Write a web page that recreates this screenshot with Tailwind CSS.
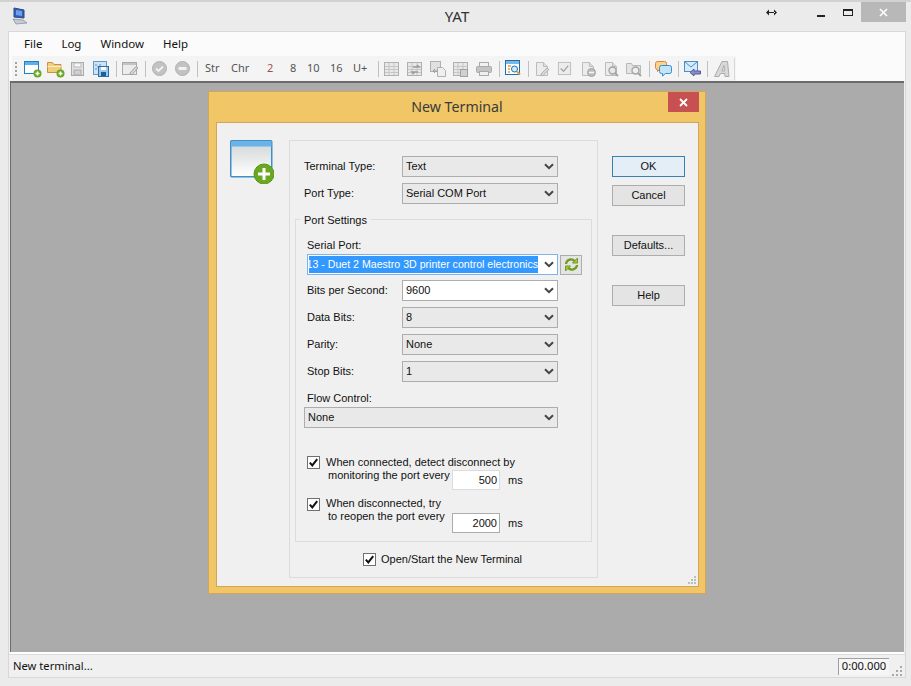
<!DOCTYPE html>
<html lang="en">
<head>
  <meta charset="UTF-8" />
  <title>YAT</title>
  <script src="https://cdn.jsdelivr.net/npm/@tailwindcss/browser@4"></script>
</head>
<body class="bg-[#ebebeb] overflow-hidden font-['Liberation_Sans',sans-serif] text-[11px] text-[#111]">
  <svg class="hidden">
    <symbol id="chev" viewBox="0 0 10 7"><path d="M1 1.200 5 5.200 9 1.200" fill="none" stroke="#444" stroke-width="2"/></symbol>
    <symbol id="tick" viewBox="0 0 13 13"><rect x=".5" y=".5" width="12" height="12" fill="#fff" stroke="#707070"/><path d="M2.800 6.600 5.300 9.400 10.200 3.200" fill="none" stroke="#111" stroke-width="2"/></symbol>
    <symbol id="grid" viewBox="0 0 16 16"><rect x=".5" y="1.500" width="14" height="13" fill="#e8e8e8" stroke="#b0b0b0"/><path d="M1 5.500h13M1 8.500h13M1 11.500h13M5 2v12M10 2v12" stroke="#c6c6c6"/></symbol>
    <symbol id="page" viewBox="0 0 16 16"><path d="M2.500 1.500h7l4 4v9h-11z" fill="#ececec" stroke="#bcbcbc"/><path d="M9.500 1.500v4h4" fill="#dcdcdc" stroke="#bcbcbc"/></symbol>
  </svg>

  <div class="w-[911px] h-[686px] relative border-t-2 border-[#d2d2d2]">
    <!-- title bar -->
    <div class="h-[29px] relative">
      <svg class="absolute left-[12px] top-[5px]" width="16" height="18" viewBox="0 0 16 18"><path d="M2 1 12 3V11L2 10z" fill="#2a62c4" stroke="#33457a"/><path d="M4 3 10 4V9L4 8z" fill="#6f9fe8"/><path d="M1 12 11 13 15 16 4 17z" fill="#c6ccd6" stroke="#7d8798" stroke-width=".7"/></svg>
      <div class="text-center text-[15px] leading-[28px] text-[#333] font-['Noto_Sans',sans-serif] pl-[3px]">YAT</div>
      <div class="absolute right-[5px] top-0 h-[20px] flex items-center">
        <svg class="mr-[40px]" width="11" height="7" viewBox="0 0 11 7"><path d="M0 3.500 3 .5v6zM11 3.500 8 .5v6zM2 3h7v1H2z" fill="#222"/></svg>
        <div class="w-[8px] h-[2px] bg-[#222] mt-[7px] mr-[18px]"></div>
        <div class="w-[10px] h-[7px] border border-t-2 border-[#222] mr-[8px]"></div>
        <div class="w-[45px] h-[20px] bg-[#b8b8b8] flex items-center justify-center">
          <svg width="9" height="9" viewBox="0 0 9 9"><path d="M1 1l7 7M8 1 1 8" stroke="#fff" stroke-width="1.600"/></svg>
        </div>
      </div>
    </div>

    <!-- main window client -->
    <div class="mx-[8px] w-[898px] h-[647px] border border-[#d8d8d8] bg-[#f0f0f0] flex flex-col">
      <div class="h-[24px] bg-[#fbfbfb] flex items-center pl-[15px] text-[11.5px] font-['Noto_Sans',sans-serif] gap-[19px]">
        <span>File</span><span>Log</span><span>Window</span><span>Help</span>
      </div>
      <!-- toolbar -->
      <div class="h-[25px] bg-[#fbfbfb] pl-[3px]">
        <div class="w-[724px] h-[25px] bg-[#f4f4f4] flex items-center text-[#555] font-['Noto_Sans',sans-serif] text-[11px]">
          <div class="w-[12px] pl-[3px] flex flex-col gap-[2px] shrink-0">
            <i class="block w-[2px] h-[2px] bg-[#a0a0a0]"></i><i class="block w-[2px] h-[2px] bg-[#a0a0a0]"></i><i class="block w-[2px] h-[2px] bg-[#a0a0a0]"></i><i class="block w-[2px] h-[2px] bg-[#a0a0a0]"></i>
          </div>
          <div class="w-[23px] flex shrink-0"><svg width="18" height="18" viewBox="0 0 18 18"><rect x=".5" y="1.500" width="14" height="12" fill="#fff" stroke="#1e81c8"/><rect x="1" y="2" width="13" height="3" fill="#5fb0e6"/><circle cx="13.500" cy="13.500" r="4" fill="#6aa821"/><path d="M13.500 11.500v4M11.500 13.500h4" stroke="#fff" stroke-width="1.500"/></svg></div>
          <div class="w-[23px] flex shrink-0"><svg width="18" height="18" viewBox="0 0 18 18"><path d="M.5 2.500h5l1.500 2h7v8H.5z" fill="#f3cd78" stroke="#c2944a"/><path d="M.5 6.500h14" stroke="#fff0c4"/><circle cx="13.500" cy="13.500" r="4" fill="#6aa821"/><path d="M13.500 11.500v4M11.500 13.500h4" stroke="#fff" stroke-width="1.500"/></svg></div>
          <div class="w-[23px] flex shrink-0"><svg width="16" height="16" viewBox="0 0 16 16"><rect x="1.500" y="1.500" width="12" height="13" fill="#e2e2e2" stroke="#aaa"/><rect x="4" y="2" width="7" height="4" fill="#f6f6f6" stroke="#b8b8b8"/><rect x="4" y="9" width="7" height="5" fill="#cfcfcf" stroke="#aaa"/></svg></div>
          <div class="w-[23px] flex shrink-0"><svg width="16" height="16" viewBox="0 0 16 16"><rect x=".5" y=".5" width="13" height="13" fill="#cfe3f5" stroke="#5a9bd0"/><path d="M2 3h2v2H2zM6 3h2v2H6zM4 5h2v2H4zM2 7h2v2H2z" fill="#8fbce4"/><rect x="5.500" y="5.500" width="10" height="10" fill="#9cc7ea" stroke="#2a6ea8"/><rect x="8" y="6" width="5" height="3" fill="#fff"/><rect x="8" y="11" width="5" height="4" fill="#1f5f96"/></svg></div>
          <div class="w-[1px] h-[16px] bg-[#c0c0c0] mr-[5px] shrink-0"></div>
          <div class="w-[23px] flex shrink-0"><svg width="17" height="16" viewBox="0 0 17 16"><rect x=".5" y="1.500" width="14" height="12" fill="#ececec" stroke="#aaa"/><rect x="1" y="2" width="13" height="2" fill="#c4c4c4"/><path d="M8 12 14 5.500l2 1.500-6 6.500H8z" fill="#d8d8d8" stroke="#a0a0a0"/></svg></div>
          <div class="w-[1px] h-[16px] bg-[#c0c0c0] mr-[6px] shrink-0"></div>
          <div class="w-[23px] flex shrink-0"><svg width="15" height="15" viewBox="0 0 15 15"><circle cx="7.500" cy="7.500" r="7" fill="#c2c2c2" stroke="#b0b0b0"/><path d="M4 7.500 6.500 10l4.500-4.500" fill="none" stroke="#f2f2f2" stroke-width="1.800"/></svg></div>
          <div class="w-[22px] flex shrink-0"><svg width="15" height="15" viewBox="0 0 15 15"><circle cx="7.500" cy="7.500" r="7" fill="#c2c2c2" stroke="#b0b0b0"/><rect x="3.500" y="6" width="8" height="3" fill="#f2f2f2"/></svg></div>
          <div class="w-[1px] h-[16px] bg-[#c0c0c0] mr-[7px] shrink-0"></div>
          <span class="w-[26px] shrink-0">Str</span>
          <span class="w-[36px] shrink-0">Chr</span>
          <span class="w-[23px] shrink-0 text-[#a05050]">2</span>
          <span class="w-[17px] shrink-0">8</span>
          <span class="w-[23px] shrink-0">10</span>
          <span class="w-[23px] shrink-0">16</span>
          <span class="w-[25px] shrink-0">U+</span>
          <div class="w-[1px] h-[16px] bg-[#c0c0c0] mr-[5px] shrink-0"></div>
          <div class="w-[23px] flex shrink-0"><svg width="16" height="16"><use href="#grid"/></svg></div>
          <div class="w-[23px] flex shrink-0"><svg width="16" height="16" viewBox="0 0 16 16"><use href="#grid" width="16" height="16"/><path d="M6 6h6l-2-2M11 11H5l2 2" fill="none" stroke="#9a9a9a" stroke-width="1.500"/></svg></div>
          <div class="w-[23px] flex shrink-0"><svg width="16" height="16" viewBox="0 0 16 16"><rect x=".5" y=".5" width="10" height="10" fill="#e0e0e0" stroke="#b0b0b0"/><path d="M7.500 6.500h5l3 3v6h-8z" fill="#efefef" stroke="#b0b0b0"/><path d="M3 10h5M3 10l2-2M3 10l2 2" stroke="#999" fill="none"/></svg></div>
          <div class="w-[23px] flex shrink-0"><svg width="16" height="16" viewBox="0 0 16 16"><use href="#grid" width="16" height="16"/><rect x="7.500" y="8.500" width="7" height="7" fill="#d0d0d0" stroke="#a0a0a0"/></svg></div>
          <div class="w-[23px] flex shrink-0"><svg width="16" height="16" viewBox="0 0 16 16"><rect x="3.500" y="1.500" width="9" height="5" fill="#f2f2f2" stroke="#aaa"/><rect x=".5" y="5.500" width="15" height="6" rx="1" fill="#c4c4c4" stroke="#aaa"/><rect x="3.500" y="10.500" width="9" height="4" fill="#efefef" stroke="#aaa"/></svg></div>
          <div class="w-[1px] h-[16px] bg-[#c0c0c0] mr-[5px] shrink-0"></div>
          <div class="w-[23px] flex shrink-0"><svg width="17" height="17" viewBox="0 0 17 17"><rect x=".5" y=".5" width="14" height="14" fill="#fff" stroke="#1a6fb4"/><rect x="1" y="1" width="13" height="3" fill="#79b7e4"/><path d="M3 6h3M3 9h2M3 12h2" stroke="#e09a3a" stroke-width="1.400"/><circle cx="9.500" cy="9" r="3" fill="#d7ebf8" stroke="#1a6fb4"/><path d="M12 11.500l3 3" stroke="#d9a13c" stroke-width="2"/></svg></div>
          <div class="w-[1px] h-[16px] bg-[#c0c0c0] mr-[5px] shrink-0"></div>
          <div class="w-[23px] flex shrink-0"><svg width="16" height="16" viewBox="0 0 16 16"><use href="#page" width="16" height="16"/><path d="M7 13 13 7l2 1.500-6 6H7z" fill="#d8d8d8" stroke="#b0b0b0"/></svg></div>
          <div class="w-[23px] flex shrink-0"><svg width="15" height="15" viewBox="0 0 16 16"><rect x="1.500" y="1.500" width="13" height="13" fill="#ececec" stroke="#bcbcbc"/><path d="M4 8l3 3 5-6" fill="none" stroke="#a4a4a4" stroke-width="1.400"/></svg></div>
          <div class="w-[23px] flex shrink-0"><svg width="16" height="16" viewBox="0 0 16 16"><use href="#page" width="16" height="16"/><circle cx="11.500" cy="11.500" r="4" fill="#bbb" stroke="#a4a4a4"/><rect x="9" y="10.700" width="5" height="1.600" fill="#f4f4f4"/></svg></div>
          <div class="w-[23px] flex shrink-0"><svg width="16" height="16" viewBox="0 0 16 16"><use href="#page" width="16" height="16"/><circle cx="9.500" cy="9.500" r="3.500" fill="#e8e8e8" stroke="#a4a4a4" stroke-width="1.400"/><path d="M12 12l3 3" stroke="#a4a4a4" stroke-width="2"/></svg></div>
          <div class="w-[23px] flex shrink-0"><svg width="16" height="16" viewBox="0 0 16 16"><path d="M.5 2.500h5l1 2h8v8H.5z" fill="#e4e4e4" stroke="#b8b8b8"/><circle cx="9.500" cy="9.500" r="3.500" fill="#eee" stroke="#a4a4a4" stroke-width="1.400"/><path d="M12 12l3 3" stroke="#a4a4a4" stroke-width="2"/></svg></div>
          <div class="w-[1px] h-[16px] bg-[#c0c0c0] mr-[5px] shrink-0"></div>
          <div class="w-[23px] flex shrink-0"><svg width="17" height="16" viewBox="0 0 17 16"><path d="M2.500 .5h7a2 2 0 0 1 2 2v4a2 2 0 0 1-2 2h-5l-2 2v-2a2 2 0 0 1-2-2v-4a2 2 0 0 1 2-2z" fill="#fbd48a" stroke="#e0803a"/><path d="M6.500 4.500h8a2 2 0 0 1 2 2v4a2 2 0 0 1-2 2h-4l-3 2.500v-2.500h-1a2 2 0 0 1-2-2v-4a2 2 0 0 1 2-2z" fill="#c4e4f8" stroke="#2f8fd0"/></svg></div>
          <div class="w-[1px] h-[16px] bg-[#c0c0c0] mr-[5px] shrink-0"></div>
          <div class="w-[23px] flex shrink-0"><svg width="17" height="16" viewBox="0 0 17 16"><rect x=".5" y=".5" width="13" height="10" fill="#d6eafa" stroke="#4a90c8"/><path d="M1 1l6 5 6-5" fill="none" stroke="#4a90c8"/><path d="M16.500 10H10V8l-4 3.500L10 15v-2h6.500z" fill="#8b8cd0" stroke="#55569a"/></svg></div>
          <div class="w-[1px] h-[16px] bg-[#c0c0c0] mr-[6px] shrink-0"></div>
          <div class="w-[20px] flex shrink-0"><svg width="16" height="16" viewBox="0 0 16 16"><path d="M.5 15.500 8 .5h5.500l1.500 15h-4l-.3-3H6.500l-1.500 3zM8 10h2.500L10 4.500z" fill="#d8d8d8" stroke="#ababab"/></svg></div>
          <div class="w-[1px] h-[22px] bg-[#d8d8d8] shrink-0"></div>
        </div>
      </div>

      <!-- MDI area -->
      <div class="mx-[1px] h-[571px] w-[894px] bg-[#ababab] border-t-2 border-l border-[#6b6b6b]"></div>
      <div class="h-[2px] bg-white mx-[1px]"></div>

      <!-- status bar -->
      <div class="flex-1 flex items-center pl-[4px] pr-[2px] font-['Noto_Sans',sans-serif] text-[11.2px] border-t border-[#dedede]">
        <span>New terminal...</span>
        <div class="ml-auto mr-[3px] w-[51px] h-[17px] border-t border-l border-[#a0a0a0] bg-[#f6f6f6] flex items-center justify-center">0:00.000</div>
        <svg class="mt-[10px]" width="11" height="11" viewBox="0 0 11 11" fill="#a8a8a8"><rect x="8" y="0" width="2" height="2"/><rect x="4" y="4" width="2" height="2"/><rect x="8" y="4" width="2" height="2"/><rect x="0" y="8" width="2" height="2"/><rect x="4" y="8" width="2" height="2"/><rect x="8" y="8" width="2" height="2"/></svg>
      </div>
    </div>

    <!-- dialog -->
    <div class="absolute left-[208px] top-[89px] w-[498px] h-[503px] bg-[#f1c667] border border-[#d3a555] flex flex-col">
      <div class="h-[30px] relative shrink-0">
        <div class="text-center text-[14.2px] leading-[29px] text-[#3a3a3a] font-['Noto_Sans',sans-serif]">New Terminal</div>
        <div class="absolute right-[6px] top-0 w-[31px] h-[20px] bg-[#c75050] flex items-center justify-center">
          <svg width="9" height="9" viewBox="0 0 9 9"><path d="M1 1l7 7M8 1 1 8" stroke="#fff" stroke-width="1.800"/></svg>
        </div>
      </div>
      <div class="relative ml-[7px] mr-[6px] h-[465px] bg-[#f0f0f0] border border-[#d3a555] flex">
        <!-- big icon -->
        <div class="w-[72px] pl-[13px] pt-[17px] shrink-0">
          <svg width="44" height="44" viewBox="0 0 44 44">
            <defs><linearGradient id="wg" x1="0" y1="0" x2="0" y2="1"><stop offset="0" stop-color="#d0d4d4"/><stop offset="1" stop-color="#ffffff"/></linearGradient></defs>
            <rect x=".75" y=".75" width="41" height="36" rx="1" fill="url(#wg)" stroke="#3c8fc8" stroke-width="1.500"/>
            <rect x="1.500" y="1.500" width="40" height="5" fill="#68b4e8"/>
            <circle cx="34" cy="34" r="10" fill="#6aa821" stroke="#5a9418"/>
            <path d="M34 28v12M28 34h12" stroke="#fff" stroke-width="3"/>
          </svg>
        </div>

        <!-- settings panel -->
        <div class="mt-[17px] w-[309px] h-[438px] border border-[#dcdcdc] pl-[14px] pt-[15px] shrink-0">
          <div class="flex items-center h-[21px]"><span class="w-[98px]">Terminal Type:</span>
            <div class="w-[156px] h-[21px] border border-[#adadad] bg-[#e9e9e9] flex items-center justify-between pl-[3px] pr-[3px]"><span>Text</span><svg width="10" height="7"><use href="#chev"/></svg></div>
          </div>
          <div class="flex items-center h-[21px] mt-[6px]"><span class="w-[98px]">Port Type:</span>
            <div class="w-[156px] h-[21px] border border-[#adadad] bg-[#e9e9e9] flex items-center justify-between pl-[3px] pr-[3px]"><span>Serial COM Port</span><svg width="10" height="7"><use href="#chev"/></svg></div>
          </div>

          <!-- port settings group -->
          <div class="relative -ml-[9px] mt-[15px] w-[297px] h-[323px] border border-[#dcdcdc] pl-[11px] pt-[18px]">
            <span class="absolute left-[4px] -top-[8px] bg-[#f0f0f0] px-[4px]">Port Settings</span>
            <div class="h-[14px] leading-[14px]">Serial Port:</div>
            <div class="flex items-center mt-[2px] h-[21px]">
              <div class="w-[251px] h-[21px] border border-[#7eb4ea] bg-white flex items-center pl-[1px] pr-[3px]">
                <div class="w-[229px] h-[17px] bg-[#3399ff] text-white text-[10.6px] overflow-hidden flex justify-end items-center whitespace-nowrap shrink-0"><span class="shrink-0">13 - Duet 2 Maestro 3D printer control electronics</span></div>
                <svg class="ml-auto" width="10" height="7"><use href="#chev"/></svg>
              </div>
              <div class="ml-[2px] w-[22px] h-[20px] border border-[#adadad] bg-[#e4e4e4] flex items-center justify-center">
                <svg width="15" height="15" viewBox="0 0 15 15" fill="none" stroke="#6f9a1c" stroke-width="2.200"><path d="M2 7a5 5 0 0 1 9-2.500"/><path d="M13 8a5 5 0 0 1-9 2.500"/><path d="M13.500 1v5h-5z" fill="#a4c93c" stroke-width="1"/><path d="M1.500 14V9h5z" fill="#a4c93c" stroke-width="1"/></svg>
              </div>
            </div>
            <div class="flex items-center h-[21px] mt-[5px]"><span class="w-[95px]">Bits per Second:</span>
              <div class="w-[156px] h-[21px] border border-[#adadad] bg-white flex items-center justify-between pl-[3px] pr-[3px]"><span>9600</span><svg width="10" height="7"><use href="#chev"/></svg></div>
            </div>
            <div class="flex items-center h-[21px] mt-[6px]"><span class="w-[95px]">Data Bits:</span>
              <div class="w-[156px] h-[21px] border border-[#adadad] bg-[#e9e9e9] flex items-center justify-between pl-[3px] pr-[3px]"><span>8</span><svg width="10" height="7"><use href="#chev"/></svg></div>
            </div>
            <div class="flex items-center h-[21px] mt-[6px]"><span class="w-[95px]">Parity:</span>
              <div class="w-[156px] h-[21px] border border-[#adadad] bg-[#e9e9e9] flex items-center justify-between pl-[3px] pr-[3px]"><span>None</span><svg width="10" height="7"><use href="#chev"/></svg></div>
            </div>
            <div class="flex items-center h-[21px] mt-[6px]"><span class="w-[95px]">Stop Bits:</span>
              <div class="w-[156px] h-[21px] border border-[#adadad] bg-[#e9e9e9] flex items-center justify-between pl-[3px] pr-[3px]"><span>1</span><svg width="10" height="7"><use href="#chev"/></svg></div>
            </div>
            <div class="h-[14px] leading-[14px] mt-[9px]">Flow Control:</div>
            <div class="-ml-[3px] mt-[2px] w-[254px] h-[21px] border border-[#adadad] bg-[#e9e9e9] flex items-center justify-between pl-[3px] pr-[3px]"><span>None</span><svg width="10" height="7"><use href="#chev"/></svg></div>

            <div class="flex mt-[28px]">
              <svg class="shrink-0" width="13" height="13"><use href="#tick"/></svg>
              <div class="ml-[6px] flex-1">
                <div class="leading-[13px]">When connected, detect disconnect by</div>
                <div class="flex items-start h-[21px]">
                  <span class="ml-[2px] w-[124px] leading-[13px] whitespace-nowrap">monitoring the port every</span>
                  <div class="w-[48px] h-[20px] mt-[1px] border border-[#dcdcdc] bg-white text-right pr-[2px] leading-[18px]">500</div>
                  <span class="ml-[8px] leading-[19px] mt-[2px]">ms</span>
                </div>
              </div>
            </div>
            <div class="flex mt-[8px]">
              <svg class="shrink-0" width="13" height="13"><use href="#tick"/></svg>
              <div class="ml-[6px] flex-1 -mt-[1px]">
                <div class="leading-[13px]">When disconnected, try</div>
                <div class="flex items-start h-[23px]">
                  <span class="ml-[2px] w-[124px] leading-[13px] whitespace-nowrap">to reopen the port every</span>
                  <div class="w-[48px] h-[20px] border border-[#adadad] bg-white text-right pr-[2px] leading-[18px] mt-[3px]">2000</div>
                  <span class="ml-[8px] leading-[19px] mt-[4px]">ms</span>
                </div>
              </div>
            </div>
          </div>

          <div class="flex items-center mt-[11px] ml-[59px] h-[13px]">
            <svg width="13" height="13"><use href="#tick"/></svg>
            <span class="ml-[5px]">Open/Start the New Terminal</span>
          </div>
        </div>

        <!-- buttons -->
        <div class="ml-[14px] pt-[33px] flex flex-col shrink-0">
          <div class="w-[73px] h-[21px] border border-[#3c7fb1] bg-[#e3eef7] flex items-center justify-center">OK</div>
          <div class="w-[73px] h-[21px] border border-[#adadad] bg-[#e4e4e4] flex items-center justify-center mt-[8px]">Cancel</div>
          <div class="w-[73px] h-[21px] border border-[#adadad] bg-[#e4e4e4] flex items-center justify-center mt-[29px]">Defaults...</div>
          <div class="w-[73px] h-[21px] border border-[#adadad] bg-[#e4e4e4] flex items-center justify-center mt-[29px]">Help</div>
        </div>

        <svg class="absolute right-[1px] bottom-[1px]" width="9" height="9" viewBox="0 0 9 9" fill="#bdbdbd"><rect x="6" y="0" width="2" height="2"/><rect x="3" y="3" width="2" height="2"/><rect x="6" y="3" width="2" height="2"/><rect x="0" y="6" width="2" height="2"/><rect x="3" y="6" width="2" height="2"/><rect x="6" y="6" width="2" height="2"/></svg>
      </div>
    </div>
  </div>
</body>
</html>
